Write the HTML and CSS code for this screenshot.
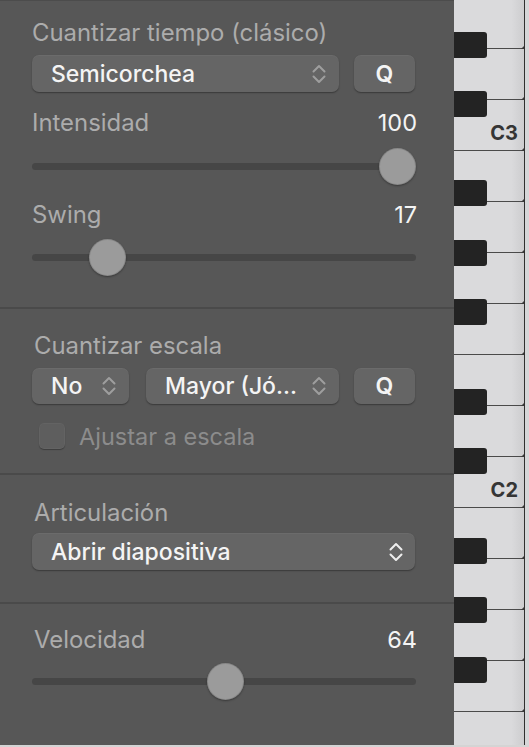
FILE: index.html
```html
<!DOCTYPE html>
<html lang="es">
<head>
<meta charset="utf-8">
<title>Cuantizar</title>
<link rel="stylesheet" href="styles.css">
</head>
<body>
<div class="app">
  <div class="panel">
    <section class="sec sec-time">
      <div class="label">Cuantizar tiempo (clásico)</div>
      <div class="row row-time">
        <div class="popup popup-wide"><span class="ptext">Semicorchea</span><svg class="chev" viewBox="0 0 16 22"><path d="M2.5 8.5 L8 3 L13.5 8.5 M2.5 13.5 L8 19 L13.5 13.5"/></svg></div>
        <div class="popup qbtn">Q</div>
      </div>
      <div class="labelrow lr-int"><span class="label">Intensidad</span><span class="val">100</span></div>
      <div class="slider sl-int"><div class="track"></div><div class="thumb" style="--v:1"></div></div>
      <div class="labelrow lr-swing"><span class="label">Swing</span><span class="val">17</span></div>
      <div class="slider sl-swing"><div class="track"></div><div class="thumb" style="--v:0.165"></div></div>
    </section>
    <section class="sec sec-scale">
      <div class="label">Cuantizar escala</div>
      <div class="row row-scale">
        <div class="popup popup-no"><span class="ptext">No</span><svg class="chev" viewBox="0 0 16 22"><path d="M2.5 8.5 L8 3 L13.5 8.5 M2.5 13.5 L8 19 L13.5 13.5"/></svg></div>
        <div class="popup popup-mayor"><span class="ptext">Mayor (Jó...</span><svg class="chev" viewBox="0 0 16 22"><path d="M2.5 8.5 L8 3 L13.5 8.5 M2.5 13.5 L8 19 L13.5 13.5"/></svg></div>
        <div class="popup qbtn">Q</div>
      </div>
      <div class="check-row"><span class="checkbox"></span><span class="check-label">Ajustar a escala</span></div>
    </section>
    <section class="sec sec-art">
      <div class="label">Articulación</div>
      <div class="row row-art">
        <div class="popup popup-full"><span class="ptext">Abrir diapositiva</span><svg class="chev chev-bright" viewBox="0 0 16 22"><path d="M2.5 8.5 L8 3 L13.5 8.5 M2.5 13.5 L8 19 L13.5 13.5"/></svg></div>
      </div>
    </section>
    <section class="sec sec-vel">
      <div class="labelrow lr-vel"><span class="label">Velocidad</span><span class="val">64</span></div>
      <div class="slider sl-vel"><div class="track"></div><div class="thumb" style="--v:0.504"></div></div>
    </section>
  </div>
  <div class="piano">
    <div class="whites">
      <div class="wkey"></div>
      <div class="wkey"></div>
      <div class="wkey"><span class="note">C3</span></div>
      <div class="wkey"></div>
      <div class="wkey"></div>
      <div class="wkey"></div>
      <div class="wkey"></div>
      <div class="wkey"></div>
      <div class="wkey"></div>
      <div class="wkey"><span class="note">C2</span></div>
      <div class="wkey"></div>
      <div class="wkey"></div>
      <div class="wkey"></div>
      <div class="wkey"></div>
      <div class="wkey"></div>
    </div>
    <div class="bkey" style="top:32px"></div>
    <div class="bkey" style="top:91px"></div>
    <div class="bkey" style="top:180px"></div>
    <div class="bkey" style="top:240px"></div>
    <div class="bkey" style="top:299px"></div>
    <div class="bkey" style="top:389px"></div>
    <div class="bkey" style="top:448px"></div>
    <div class="bkey" style="top:538px"></div>
    <div class="bkey" style="top:597px"></div>
    <div class="bkey" style="top:657px"></div>
  </div>
  <div class="bottom-strip"></div>
</div>
</body>
</html>
```
FILE: styles.css
```css
* { box-sizing: border-box; }
html, body { margin: 0; padding: 0; }
body {
  background: #575757;
  font-family: Inter, "Noto Sans", "Liberation Sans", sans-serif;
  -webkit-font-smoothing: antialiased;
}
.app {
  position: relative;
  display: flex;
  width: 529px;
  height: 747px;
  overflow: hidden;
}
.panel {
  width: 454px;
  flex: none;
  display: flex;
  flex-direction: column;
  background: #575757;
  border-top: 1px solid #4c4c4c;
}
.sec {
  padding: 0 38px 0 32px;
  border-bottom: 2px solid #4a4a4a;
  display: flex;
  flex-direction: column;
}
.sec-time { height: 308px; padding-top: 19px; }
.sec-scale { height: 166px; padding-top: 24px; }
.sec-art { height: 129px; padding-top: 25px; }
.sec-vel { flex: 1; border-bottom: none; padding-top: 23px; }

.label {
  font-size: 23.9px;
  line-height: 26px;
  color: #acacac;
  letter-spacing: 0;
  white-space: nowrap;
}
.sec-scale > .label, .sec-art > .label, .lr-vel .label { padding-left: 2px; }
.labelrow {
  display: flex;
  justify-content: space-between;
  align-items: baseline;
}
.val {
  font-size: 23.5px;
  line-height: 26px;
  color: #f4f4f4;
  margin-right: -1px;
}
.lr-int { margin-top: 18px; }
.lr-swing { margin-top: 17px; }

.row { display: flex; }
.row-time { margin-top: 9px; gap: 15px; height: 37px; }
.row-scale { margin-top: 9px; height: 36px; }
.row-art { margin-top: 7px; height: 37px; }

.popup {
  position: relative;
  display: flex;
  align-items: center;
  height: 100%;
  background: #656565;
  border-radius: 7px;
  box-shadow: 0 1px 1.5px rgba(0,0,0,0.35), inset 0 1px 0 rgba(255,255,255,0.04);
  color: #f4f4f4;
  font-size: 23px;
  font-weight: 500;
  padding-left: 19px;
  padding-right: 12px;
  white-space: nowrap;
}
.ptext { flex: 1; }
.chev {
  width: 16px;
  height: 22px;
  flex: none;
  fill: none;
  stroke: #9e9e9e;
  stroke-width: 2;
  stroke-linecap: round;
  stroke-linejoin: round;
}
.chev-bright { stroke: #eeeeee; }
.popup-wide { width: 307px; }
.qbtn {
  width: 61px;
  justify-content: center;
  padding: 0;
  font-weight: 600;
}
.popup-no { width: 97px; }
.popup-mayor { width: 193px; margin-left: 17px; margin-right: 15px; }
.popup-full { width: 383px; padding-right: 11px; }

.check-row {
  display: flex;
  align-items: center;
  margin-top: 19px;
  height: 26px;
  padding-left: 7px;
}
.checkbox {
  width: 26px;
  height: 26px;
  border-radius: 5px;
  background: #5e5e5e;
  box-shadow: 0 1px 1px rgba(0,0,0,0.3), inset 0 0 0 1px rgba(255,255,255,0.03);
}
.check-label {
  margin-left: 14px;
  font-size: 23.5px;
  color: #8c8c8c;
}

.slider {
  position: relative;
  height: 37px;
  flex: none;
}
.sl-int { margin-top: 12px; }
.sl-swing { margin-top: 11px; }
.sl-vel { margin-top: 10px; }
.track {
  margin-top: 15px;
  height: 7px;
  border-radius: 4px;
  background: #464646;
}
.thumb {
  position: absolute;
  top: 0;
  left: calc(var(--v) * (100% - 37px));
  width: 37px;
  height: 37px;
  border-radius: 50%;
  background: #9b9b9b;
  box-shadow: inset 0 0 0 1px rgba(0,0,0,0.12), 0 1px 2px rgba(0,0,0,0.35);
}

.piano {
  position: relative;
  flex: none;
  width: 75px;
  height: 747px;
  background: #d6d6d8;
}
.whites {
  display: flex;
  flex-direction: column;
  margin-top: -2px;
  width: 71px;
  border-right: 1px solid #2f2f2f;
}
.wkey {
  position: relative;
  height: 51px;
  flex: none;
  border-bottom: 1px solid #4a4a4a;
  background: linear-gradient(to right, #dadadc 0, #dadadc 82%, #cdcdcf 100%);
  display: flex;
  align-items: flex-end;
  justify-content: flex-end;
}
.wkey::after {
  content: "";
  position: absolute;
  right: 0;
  bottom: -4px;
  border-style: solid;
  border-width: 3.5px 3px 3.5px 0;
  border-color: transparent #3a3a3a transparent transparent;
}
.note {
  font-size: 20px;
  font-weight: 700;
  color: #353535;
  line-height: 20px;
  padding: 0 6px 7px 0;
}
.bkey {
  position: absolute;
  left: 0;
  width: 33px;
  height: 26px;
  background: #232323;
  border-radius: 0 3px 3px 0;
}
.bottom-strip {
  position: absolute;
  left: 0;
  right: 0;
  bottom: 0;
  height: 2px;
  background: #d4d4d4;
}
```
